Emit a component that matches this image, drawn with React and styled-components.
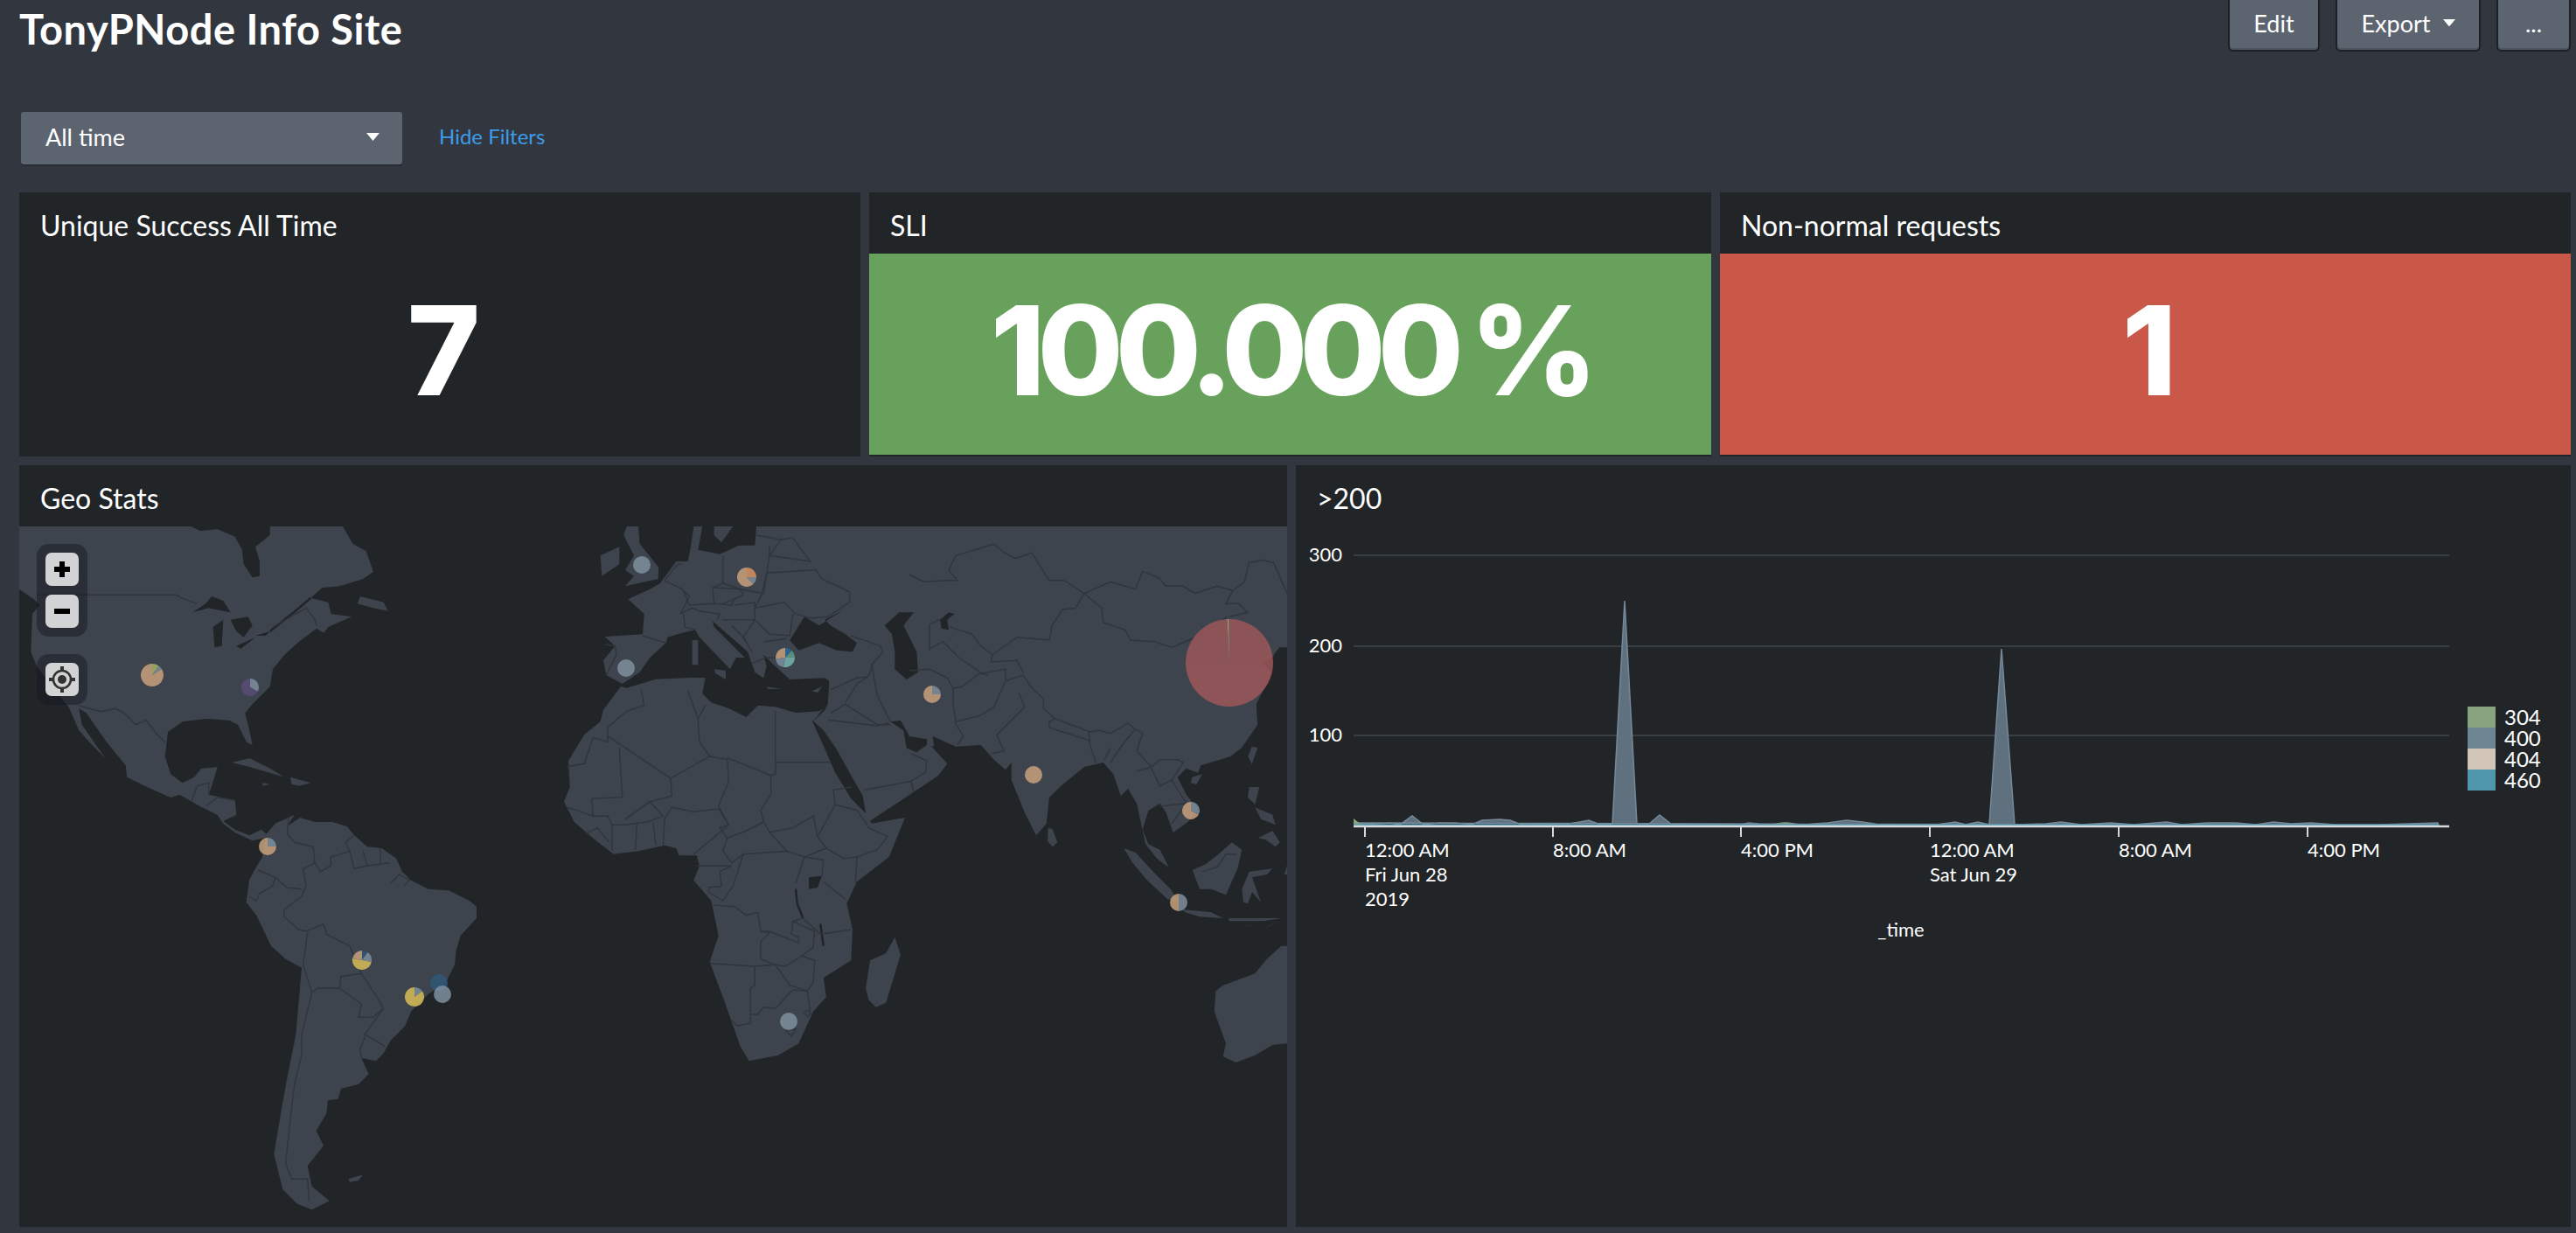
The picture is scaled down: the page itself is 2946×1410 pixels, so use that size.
import React from 'react';
import styled, { createGlobalStyle } from 'styled-components';

const Global = createGlobalStyle`
  html, body { margin: 0; padding: 0; background: #32373f; }
  body { font-family: Lato, "Open Sans", sans-serif; color: #fff; }
`;

// map outlines were traced on 3x crops, at() turns crop coordinates into page ones
const at = (ox, oy) => (pts) => pts.map(([x, y]) => [ox + x / 3, oy + y / 3]);
const na = at(22, 602);
const sa = at(250, 900);
const eu = at(660, 602);
const af = at(640, 770);
const as = at(1040, 602);
const se = at(1172, 900);
const line = (pts, close) =>
  'M' + pts.map(([x, y]) => `${x.toFixed(1)} ${y.toFixed(1)}`).join('L') + (close ? 'Z' : '');

const land = [
  // north america, joins south america at panama
  na([[0,0],[590,0],[620,15],[680,10],[740,35],[765,80],[770,130],[800,175],[825,170],[825,120],[810,70],[860,30],[860,0],[1110,0],[1145,60],[1190,85],[1215,155],[1180,180],[1100,205],[1040,210],[1000,245],[1060,260],[1070,300],[1140,310],[1060,345],[1045,365],[1020,350],[960,395],[910,440],[870,490],[860,550],[800,610],[775,640],[790,700],[800,750],[780,740],[750,680],[720,665],[640,660],[560,670],[510,705],[500,790],[520,850],[560,880],[600,860],[625,830],[680,825],[665,875],[650,920],[740,940],[745,990],[700,1010],[740,1040],[790,1060],[830,1040],[860,1065],[800,1078],[740,1050],[700,1020],[680,990],[620,960],[550,920],[520,930],[440,895],[370,860],[365,820],[300,740],[230,640],[205,625],[215,680],[295,795],[250,750],[205,700],[170,620],[130,570],[60,480],[40,430],[45,300],[70,270],[50,250],[0,215]]),
  na([[1170,240],[1250,260],[1265,290],[1215,280],[1160,265]]),
  na([[730,810],[790,795],[860,830],[910,860],[860,845],[790,825]]),
  na([[930,860],[1000,880],[960,890],[935,885]]),
  na([[835,880],[860,885],[835,890]]),
  // south america
  sa([[160,165],[195,125],[260,95],[235,135],[280,105],[330,120],[390,120],[440,135],[465,165],[510,205],[560,210],[610,245],[630,290],[660,320],[720,350],[790,355],[860,390],[885,410],[885,450],[830,510],[815,560],[810,610],[780,670],[720,710],[660,770],[640,820],[590,870],[565,915],[540,940],[490,930],[515,985],[480,1020],[420,1035],[410,1070],[375,1075],[370,1120],[335,1180],[360,1230],[305,1300],[320,1370],[380,1420],[320,1450],[270,1430],[220,1380],[190,1260],[215,1110],[235,1000],[265,850],[285,620],[230,590],[180,545],[130,440],[95,395],[105,320],[120,290],[150,240]]),
  sa([[445,1345],[495,1330],[480,1350],[450,1355]]),
  // africa
  af([[210,45],[150,125],[140,165],[85,210],[30,300],[35,390],[15,440],[50,510],[120,570],[185,620],[270,610],[360,590],[400,600],[410,625],[470,625],[480,660],[460,710],[520,780],[535,850],[545,900],[515,990],[560,1110],[620,1280],[650,1330],[750,1310],[820,1270],[870,1160],[915,1110],[905,1045],[1000,985],[1005,880],[985,790],[1020,715],[1130,630],[1185,495],[1070,515],[1045,470],[960,340],[900,200],[870,165],[905,120],[890,130],[810,135],[740,115],[680,110],[640,150],[580,120],[520,100],[490,70],[500,15],[450,15],[330,20],[230,50]]),
  // eurasia, going clockwise from the baltic
  [...eu([[615,0]]), [1472, 602],
   ...as([[1296,415],[1270,415],[1250,440],[1240,510],[1190,610],[1195,680],[1140,760],[1100,790],[1000,820],[990,845],[950,830],[920,860],[950,920],[990,970],[960,1010],[905,1050],[880,980],[860,950],[820,975],[800,1040],[820,1090],[860,1110],[890,1170],[850,1140],[810,1090],[780,950],[750,900],[725,925],[700,850],[665,810],[600,825],[520,890],[480,930],[470,1020],[435,1060],[395,980],[350,870],[350,810],[330,835],[290,800],[245,750],[160,755],[80,720]]),
   ...af([[1285,250],[1275,250],[1330,310],[1300,350],[1210,410],[1060,510],[1045,470],[1010,400],[900,200],[870,165]]),
   ...eu([[850,630],[860,610],[865,530],[850,520],[730,525],[680,480],[640,440],[650,480],[640,520],[610,500],[585,430],[465,325],[470,345],[575,450],[545,450],[525,490],[420,380],[405,355],[360,365],[310,380],[305,400],[250,450],[215,500],[155,540],[100,510],[90,460],[130,410],[95,378],[225,370],[230,300],[175,250],[250,215],[285,195],[340,120],[380,120],[390,70],[400,0],[430,0],[415,80],[490,95],[555,65],[610,65]])],
  // europe islands
  eu([[80,100],[145,70],[145,130],[85,170]]),
  eu([[160,30],[170,0],[210,0],[215,60],[280,140],[278,180],[210,195],[165,205],[195,170],[165,150],[195,100]]),
  eu([[470,0],[535,0],[495,55],[470,30]]),
  eu([[395,390],[415,390],[415,475],[395,475]]),
  eu([[470,490],[510,495],[510,525],[475,505]]),
  eu([[650,550],[700,558],[655,558]]),
  eu([[805,565],[840,550],[825,570]]),
  // indian ocean and south east asia
  af([[1150,905],[1170,965],[1120,1130],[1085,1145],[1060,1120],[1050,1080],[1065,985],[1120,960]]),
  se([[80,140],[95,145],[112,190],[95,205],[78,185]]),
  se([[340,210],[380,225],[440,290],[500,350],[530,395],[490,385],[420,320],[370,260]]),
  se([[540,420],[640,430],[680,450],[600,445],[550,430]]),
  se([[700,450],[880,450],[820,460],[700,460]]),
  se([[750,470],[780,480],[760,475]]),
  se([[815,490],[880,455],[840,475]]),
  se([[575,285],[620,265],[665,230],[710,190],[745,215],[730,280],[690,370],[640,350],[600,350]]),
  se([[745,350],[770,290],[850,280],[830,300],[780,310],[810,395],[780,360],[765,400],[750,395]]),
  se([[770,0],[805,0],[790,60],[765,35]]),
  se([[800,175],[850,150],[875,190],[860,205],[825,180]]),
  se([[790,70],[850,95],[860,130],[810,110]]),
  se([[900,270],[900,300],[890,300]]),
  as([[1175,755],[1195,760],[1175,815],[1162,790]]),
  as([[970,860],[1005,850],[985,885],[965,880]]),
  // australia
  se([[900,545],[880,545],[830,590],[790,640],[680,680],[655,700],[650,770],[690,880],[680,925],[725,945],[790,920],[850,885],[900,880]]),
];

const waters = [
  eu([[730,390],[780,310],[830,340],[915,285],[850,320],[870,340],[920,370],[960,400],[945,430],[890,425],[830,400],[760,425]]),
  eu([[1055,340],[1105,295],[1155,295],[1120,340],[1165,430],[1170,500],[1130,525],[1090,490],[1090,430],[1080,370]]),
  eu([[1075,670],[1110,665],[1140,720],[1200,730],[1200,750],[1165,775],[1130,760],[1120,700]]),
  af([[865,160],[905,195],[950,260],[1000,350],[1040,420],[1050,480],[1000,430],[945,340],[895,225]]),
  af([[855,700],[900,695],[885,735],[855,740]]),
  as([[105,320],[135,295],[155,300],[130,320],[135,355],[110,350]]),
  na([[595,295],[640,265],[660,240],[700,255],[725,295],[700,290],[650,280]]),
  na([[665,345],[700,320],[695,410],[670,415]]),
  na([[725,320],[785,310],[800,340],[770,380],[745,360]]),
  na([[745,410],[810,380],[760,420]]),
  na([[810,375],[860,360],[845,375]]),
  as([[1240,500],[1215,470],[1250,445],[1246,500]]),
];

const rivers = [
  na([[860,360],[960,280],[1000,245]]),
  af([[810,740],[815,790],[835,840]]),
  af([[895,860],[905,935]]),
];

const borders = [
  na([[60,235],[540,235],[555,245],[610,265]]),
  na([[870,345],[930,310],[985,280],[1015,320],[1020,340]]),
  na([[205,615],[280,635],[330,625],[360,640],[400,680],[435,665],[470,710],[500,740]]),
  na([[590,945],[610,890],[650,880],[650,920]]),
  na([[640,960],[680,930],[740,940]]),
  sa([[240,105],[235,160],[260,190],[325,205],[330,260],[290,280],[300,340],[285,375]]),
  sa([[330,260],[350,290],[385,270],[385,240],[450,220],[435,190],[465,165]]),
  sa([[450,220],[465,280],[510,270],[495,220]]),
  sa([[555,260],[555,210]]),
  sa([[510,270],[585,260]]),
  sa([[590,330],[620,300],[655,320],[635,340]]),
  sa([[135,285],[195,310],[235,345],[285,350]]),
  sa([[195,310],[185,340],[140,365],[130,390],[105,375]]),
  sa([[285,375],[225,420],[225,445],[275,490],[300,495],[360,470]]),
  sa([[360,470],[370,505],[450,545],[490,640],[420,650],[415,690],[340,690],[320,705],[290,610],[305,500]]),
  sa([[415,690],[490,745],[480,790],[530,790],[565,760],[550,730],[490,640]]),
  sa([[320,705],[285,850],[285,920],[260,1020],[245,1150],[230,1290],[250,1345],[305,1345],[310,1420]]),
  sa([[490,930],[485,900],[505,850],[570,890]]),
  sa([[565,760],[500,850]]),
  // africa
  af([[165,185],[165,235],[115,220],[85,310],[25,320]]),
  af([[280,55],[290,110],[230,130],[165,185]]),
  af([[165,215],[380,360]]),
  af([[205,255],[215,425],[110,430]]),
  af([[380,360],[385,420],[310,440],[225,500]]),
  af([[380,360],[515,285],[575,295],[580,370],[545,455]]),
  af([[440,60],[475,155],[480,235],[515,285]]),
  af([[475,155],[500,110]]),
  af([[740,130],[740,345]]),
  af([[575,290],[725,350],[740,345],[740,305],[930,305]]),
  af([[725,350],[725,415],[690,470],[700,510]]),
  af([[545,455],[580,520],[550,530],[575,565],[640,540],[700,510]]),
  af([[385,460],[460,475],[545,465],[580,520],[460,620]]),
  af([[385,460],[360,500],[355,590]]),
  af([[225,500],[310,440],[355,490],[300,510],[225,520]]),
  af([[265,510],[260,605]]),
  af([[320,510],[330,590]]),
  af([[110,430],[115,490],[165,490],[180,520],[225,520]]),
  af([[25,460],[60,470],[115,490]]),
  af([[180,520],[180,610]]),
  af([[90,550],[130,530],[170,580]]),
  af([[575,565],[560,610],[590,650],[630,620],[780,610],[720,545],[700,510]]),
  af([[720,545],[800,530],[870,490],[885,560],[915,600],[840,630],[780,610]]),
  af([[885,560],[945,450],[1020,470],[1050,510],[1060,530],[1125,560],[1090,605],[1020,630],[975,635],[915,600]]),
  af([[945,450],[940,400],[1000,390]]),
  af([[1020,630],[1015,720]]),
  af([[840,630],[905,640],[900,695]]),
  af([[905,715],[980,775]]),
  af([[630,620],[595,730],[560,780],[510,750],[515,730]]),
  af([[470,660],[590,660],[550,680],[555,730],[510,735]]),
  af([[840,630],[810,720]]),
  af([[835,840],[800,850],[795,895],[820,905],[820,925],[770,905],[720,885],[690,885],[680,820],[640,830],[600,800],[530,795]]),
  af([[690,885],[720,890],[690,920],[690,980],[740,1000],[670,1005],[515,995]]),
  af([[740,1000],[775,1005],[830,970],[875,985],[870,1060],[850,1090]]),
  af([[830,970],[870,940],[875,885],[800,850]]),
  af([[835,840],[895,895],[1000,880]]),
  af([[670,1005],[670,1070],[655,1080],[655,1200],[610,1210],[590,1190]]),
  af([[655,1170],[680,1170],[700,1145],[740,1150],[800,1085],[850,1090],[860,1160]]),
  af([[740,1000],[790,1070],[850,1090]]),
  af([[775,1225],[810,1220],[795,1245],[775,1225]]),
  af([[850,1155],[862,1165],[850,1178],[838,1165],[850,1155]]),
  af([[920,160],[1090,180],[1130,170]]),
  af([[1045,400],[1130,385],[1205,370],[1255,340],[1260,300],[1205,275]]),
  af([[1205,370],[1215,405]]),
  // middle east and europe
  eu([[870,640],[920,610],[1030,680],[1075,680]]),
  eu([[870,560],[960,520],[1000,515],[960,540],[920,605]]),
  eu([[1010,470],[1030,580],[1075,670]]),
  eu([[1000,515],[1015,470],[1050,430]]),
  eu([[940,375],[1040,410],[1050,430]]),
  eu([[225,375],[305,400]]),
  eu([[300,185],[360,215],[385,240],[355,300]]),
  eu([[365,300],[370,345],[405,355]]),
  eu([[355,300],[395,280],[420,290]]),
  eu([[360,210],[385,270],[470,265],[465,210],[500,195],[500,100]]),
  eu([[500,195],[560,215],[640,230],[660,100],[660,70]]),
  eu([[615,30],[700,45],[660,100]]),
  eu([[735,40],[700,45]]),
  eu([[660,100],[800,120],[740,40]]),
  eu([[650,160],[800,150]]),
  eu([[650,160],[635,230],[610,280],[710,260],[750,300],[800,315],[860,310],[935,260],[935,225],[840,180],[820,150],[800,150]]),
  eu([[540,270],[610,260],[610,320],[660,370],[730,375],[740,300]]),
  eu([[610,320],[570,380],[600,430]]),
  eu([[640,395],[720,385]]),
  eu([[420,290],[490,300],[480,320]]),
  eu([[470,265],[530,270],[540,250]]),
  eu([[470,210],[560,215],[570,235],[500,265]]),
  eu([[500,320],[570,320],[610,320]]),
  eu([[530,340],[580,390]]),
  eu([[600,470],[650,450],[690,450]]),
  eu([[95,405],[130,410],[135,440],[100,510]]),
  eu([[300,185],[345,130],[360,130]]),
  // asia
  as([[0,165],[50,190],[130,185],[165,185],[135,150],[160,100],[290,60],[325,90],[365,110],[420,90],[480,185],[530,185],[600,230]]),
  as([[600,230],[690,190],[775,215],[800,155],[855,175],[880,205],[940,205],[980,230],[1055,205],[1110,220],[1150,190],[1165,125],[1210,115],[1250,125],[1296,230]]),
  as([[1110,220],[1085,265],[1130,265],[1160,295],[1100,310]]),
  as([[600,230],[660,280],[665,330],[740,355],[760,390],[840,395],[900,415],[960,390],[1000,370],[1090,310]]),
  as([[70,335],[70,425]]),
  as([[70,335],[105,320]]),
  as([[140,345],[215,370],[245,410],[285,440],[370,380],[480,390],[490,340],[525,285],[570,280],[600,230]]),
  as([[70,420],[115,395],[170,450],[250,505],[270,510]]),
  as([[285,440],[280,465],[370,460],[390,500]]),
  as([[150,555],[180,550],[240,505],[330,490],[330,530],[290,620],[240,650],[160,670],[150,610],[150,555]]),
  as([[0,495],[70,490],[130,520],[150,555]]),
  as([[155,670],[185,720],[165,750]]),
  as([[330,530],[390,510],[425,560],[460,590],[460,625],[500,660],[620,705],[650,700],[690,710],[750,675],[775,695],[800,710],[780,770],[830,825]]),
  as([[375,570],[395,620],[300,715],[325,770],[280,780]]),
  as([[500,660],[480,670],[480,690],[620,735],[615,705]]),
  as([[615,735],[640,810]]),
  as([[690,760],[670,800]]),
  as([[775,695],[730,750],[690,810]]),
  as([[780,840],[830,825],[860,800],[920,800],[940,810],[900,870],[950,950]]),
  as([[830,830],[860,890],[900,870]]),
  as([[860,960],[950,950],[900,1020]]),
  se([[610,290],[660,275],[690,230],[725,230]]),
];

const TAN = '#c8a07e';
const GREY = '#7e8f9d';
const YEL = '#d9bd56';
const BLUE = '#2f5778';

const markers = [
  { x: 174, y: 772, r: 13, s: [['#a7b25c', 0.1], [GREY, 0.06], [TAN, 0.84]] },
  { x: 286, y: 786, r: 10, s: [[GREY, 0.33], ['#5c4c78', 0.67]] },
  { x: 306, y: 968, r: 10, s: [[GREY, 0.25], [TAN, 0.75]] },
  { x: 414, y: 1098, r: 11, s: [[BLUE, 0.1], [GREY, 0.18], [YEL, 0.5], [TAN, 0.22]] },
  { x: 474, y: 1140, r: 11, s: [[GREY, 0.15], [YEL, 0.85]] },
  { x: 502, y: 1124, r: 10, s: [[BLUE, 1]] },
  { x: 506, y: 1137, r: 10, s: [[GREY, 1]] },
  { x: 734, y: 646, r: 10, s: [[GREY, 1]] },
  { x: 716, y: 764, r: 10, s: [[GREY, 1]] },
  { x: 854, y: 660, r: 11, s: [['#d8935f', 0.25], [GREY, 0.13], [TAN, 0.62]] },
  { x: 898, y: 752, r: 11, s: [['#2a6a9a', 0.12], ['#5c9c87', 0.13], ['#74b5b2', 0.28], [GREY, 0.2], [TAN, 0.27]] },
  { x: 1066, y: 794, r: 10, s: [[GREY, 0.25], [TAN, 0.75]] },
  { x: 1182, y: 886, r: 10, s: [[TAN, 1]] },
  { x: 1362, y: 927, r: 10, s: [[GREY, 0.33], [TAN, 0.67]] },
  { x: 1348, y: 1032, r: 10, s: [[GREY, 0.5], [TAN, 0.5]] },
  { x: 902, y: 1168, r: 10, s: [[GREY, 1]] },
  { x: 1406, y: 758, r: 50, o: 0.8, s: [['#a2595a', 0.995], ['#a9b884', 0.005]], from: -1 },
];

function slicePath(cx, cy, r, a, b) {
  const rad = (d) => ((d - 90) * Math.PI) / 180;
  const x1 = cx + r * Math.cos(rad(a));
  const y1 = cy + r * Math.sin(rad(a));
  const x2 = cx + r * Math.cos(rad(b));
  const y2 = cy + r * Math.sin(rad(b));
  return `M${cx} ${cy}L${x1} ${y1}A${r} ${r} 0 ${b - a > 180 ? 1 : 0} 1 ${x2} ${y2}Z`;
}

function Pie({ m }) {
  let angle = m.from || 0;
  return (
    <g opacity={m.o || 0.85}>
      {m.s.map(([color, part], i) => {
        if (part === 1) return <circle key={i} cx={m.x} cy={m.y} r={m.r} fill={color} />;
        const start = angle;
        angle += part * 360;
        return <path key={i} d={slicePath(m.x, m.y, m.r, start, angle)} fill={color} />;
      })}
    </g>
  );
}

function WorldMap() {
  return (
    <MapBox>
      <MapSvg viewBox="22 602 1450 801">
        {land.map((p, i) => <path key={i} d={line(p, true)} fill="#3d444d" />)}
        {waters.map((p, i) => <path key={i} d={line(p, true)} fill="#212528" />)}
        {rivers.map((p, i) => (
          <path key={i} d={line(p)} fill="none" stroke="#212528" strokeWidth="2.5" />
        ))}
        {borders.map((p, i) => (
          <path key={i} d={line(p)} fill="none" stroke="#30353c" strokeWidth="1.4" />
        ))}
        {markers.map((m, i) => <Pie key={i} m={m} />)}
      </MapSvg>
      <ZoomGroup>
        <MapButton>
          <svg width="20" height="20" viewBox="0 0 20 20"><path d="M7 1h6v6h6v6h-6v6H7v-6H1V7h6z" fill="#000" /></svg>
        </MapButton>
        <MapButton>
          <svg width="20" height="20" viewBox="0 0 20 20"><rect x="1" y="7" width="18" height="6" fill="#000" /></svg>
        </MapButton>
      </ZoomGroup>
      <LocateGroup>
        <MapButton>
          <svg width="32" height="32" viewBox="0 0 32 32" fill="none" stroke="#333" strokeWidth="2.6">
            <circle cx="16" cy="16" r="10" />
            <circle cx="16" cy="16" r="5" fill="#333" stroke="none" />
            <path d="M16 1v5M16 26v5M1 16h5M26 16h5" strokeWidth="4" />
          </svg>
        </MapButton>
      </LocateGroup>
    </MapBox>
  );
}

// chart, page coordinates through the viewBox
const greyTop = [
  [1548,941],[1560,943],[1590,941],[1601,943],[1615,933],[1628,943],[1645,941],[1665,941],[1683,943],[1695,938],[1715,937],[1727,938],[1740,943],[1790,943],[1817,938],[1830,943],[1844,942],[1858,687],[1872,942],[1885,943],[1898,932],[1912,943],[1990,943],[2000,941],[2020,943],[2045,941],[2060,943],[2090,941],[2112,938],[2130,940],[2150,943],[2195,943],[2215,943],[2236,940],[2248,943],[2262,940],[2275,943],[2289,742],[2304,943],[2340,942],[2357,940],[2380,943],[2414,941],[2440,943],[2478,940],[2495,943],[2524,941],[2557,941],[2580,943],[2600,940],[2620,942],[2643,941],[2670,943],[2720,943],[2788,941],[2789,944],
];
const yTicks = [[300, 635], [200, 739], [100, 841]];
const xTicks = [
  { x: 1561, lines: ['12:00 AM', 'Fri Jun 28', '2019'] },
  { x: 1776, lines: ['8:00 AM'] },
  { x: 1991, lines: ['4:00 PM'] },
  { x: 2207, lines: ['12:00 AM', 'Sat Jun 29'] },
  { x: 2423, lines: ['8:00 AM'] },
  { x: 2639, lines: ['4:00 PM'] },
];
const legend = [['304', '#87a47e'], ['400', '#708594'], ['404', '#d0c5b7'], ['460', '#4e97ac']];

function AreaChart() {
  return (
    <ChartSvg viewBox="1482 602 1458 801">
      {yTicks.map(([label, y]) => (
        <g key={label}>
          <line x1="1548" x2="2801" y1={y} y2={y} stroke="#373f44" strokeWidth="2" />
          <ChartText x="1535" y={y + 7} textAnchor="end">{label}</ChartText>
        </g>
      ))}
      <path d={line(greyTop, true)} fill="#5f707f" stroke="#76899a" strokeWidth="1.5" />
      <path d="M1548 936L1558 944H1548Z" fill="#87a47e" />
      <path d="M2060 944L2020 944L2020 943L2040 940L2060 944Z" fill="#87a47e" opacity="0.6" />
      <path d="M1548 942.5L2789 942.5L2789 944L1548 944Z" fill="#4e97ac" />
      <line x1="1548" x2="2801" y1="945" y2="945" stroke="#d6d8d9" strokeWidth="2.5" />
      {xTicks.map((t) => (
        <g key={t.x}>
          <line x1={t.x} x2={t.x} y1="946" y2="957" stroke="#d6d8d9" strokeWidth="2" />
          {t.lines.map((l, i) => (
            <ChartText key={l} x={t.x} y={980 + i * 28}>{l}</ChartText>
          ))}
        </g>
      ))}
      <ChartText x="2174" y="1071" textAnchor="middle">_time</ChartText>
      {legend.map(([label, color], i) => (
        <g key={label}>
          <rect x="2822" y={808 + i * 24} width="32" height="24" fill={color} />
          <LegendText x="2864" y={829 + i * 24}>{label}</LegendText>
        </g>
      ))}
    </ChartSvg>
  );
}

function Caret({ size = 14 }) {
  return (
    <svg width={size} height={size * 0.6} viewBox="0 0 10 6"><path d="M0 0h10L5 6z" fill="#fff" /></svg>
  );
}

export default function App() {
  return (
    <>
      <Global />
      <Page>
        <Header>
          <Title>TonyPNode Info Site</Title>
          <Actions>
            <TopButton $w={105}>Edit</TopButton>
            <TopButton $w={166}>Export <Caret /></TopButton>
            <TopButton $w={85}>...</TopButton>
          </Actions>
        </Header>
        <FilterRow>
          <Select>All time <Caret size={15} /></Select>
          <FilterLink>Hide Filters</FilterLink>
        </FilterRow>
        <TopRow>
          <Panel>
            <PanelTitle>Unique Success All Time</PanelTitle>
            <SingleValue>7</SingleValue>
          </Panel>
          <Panel>
            <PanelTitle>SLI</PanelTitle>
            <SingleValue $bg="#67a15b">100.000 %</SingleValue>
          </Panel>
          <Panel>
            <PanelTitle>Non-normal requests</PanelTitle>
            <SingleValue $bg="#ca5849">1</SingleValue>
          </Panel>
        </TopRow>
        <BottomRow>
          <Panel>
            <PanelTitle>Geo Stats</PanelTitle>
            <WorldMap />
          </Panel>
          <Panel>
            <PanelTitle>&gt;200</PanelTitle>
            <AreaChart />
          </Panel>
        </BottomRow>
      </Page>
    </>
  );
}

const Page = styled.div`
  width: 2946px;
  height: 1410px;
  box-sizing: border-box;
  padding: 0 6px 7px 22px;
  overflow: hidden;
  display: flex;
  flex-direction: column;
`;

const Header = styled.div`
  display: flex;
  justify-content: space-between;
  align-items: flex-start;
  height: 127px;
`;

const Title = styled.h1`
  margin: 0;
  font-size: 47px;
  line-height: 66px;
  font-weight: 700;
  letter-spacing: 0.5px;
`;

const Actions = styled.div`
  display: flex;
  gap: 18px;
`;

const TopButton = styled.div`
  width: ${(p) => p.$w}px;
  height: 59px;
  box-sizing: border-box;
  padding-bottom: 5px;
  background: #5c6470;
  border: 2px solid #1d2125;
  border-top: 0;
  border-radius: 0 0 6px 6px;
  box-shadow: inset 0 -2px 0 #4c545f;
  display: flex;
  align-items: center;
  justify-content: center;
  gap: 14px;
  font-size: 27px;
`;

const FilterRow = styled.div`
  display: flex;
  align-items: center;
  gap: 42px;
  height: 62px;
  margin-bottom: 31px;
  padding-left: 2px;
`;

const Select = styled.div`
  width: 436px;
  height: 60px;
  box-sizing: border-box;
  background: #5c6470;
  border-radius: 3px;
  box-shadow: 0 2px 0 #282c32;
  padding: 0 26px 4px 28px;
  display: flex;
  align-items: center;
  justify-content: space-between;
  font-size: 27px;
`;

const FilterLink = styled.a`
  color: #3d9be9;
  font-size: 24px;
  margin-bottom: 6px;
`;

const TopRow = styled.div`
  display: grid;
  grid-template-columns: 962px 963px 973px;
  gap: 10px;
  height: 302px;
  margin-bottom: 10px;
`;

const BottomRow = styled.div`
  display: grid;
  grid-template-columns: 1450px 1458px;
  gap: 10px;
  flex: 1;
  min-height: 0;
`;

const Panel = styled.section`
  background: #212528;
  display: flex;
  flex-direction: column;
  min-height: 0;
`;

const PanelTitle = styled.h2`
  margin: 0;
  flex: 0 0 70px;
  box-sizing: border-box;
  padding: 5px 24px 0;
  display: flex;
  align-items: center;
  font-size: 32px;
  font-weight: 400;
`;

const SingleValue = styled.div`
  flex: 1;
  margin-bottom: 2px;
  padding-bottom: 10px;
  background: ${(p) => p.$bg || 'transparent'};
  display: flex;
  align-items: center;
  justify-content: center;
  font-family: Inter, Lato, sans-serif;
  font-size: 142px;
  font-weight: 800;
  letter-spacing: -9px;
  word-spacing: -6px;
`;

const MapBox = styled.div`
  position: relative;
  flex: 1;
  min-height: 0;
  overflow: hidden;
`;

const MapSvg = styled.svg`
  display: block;
  width: 100%;
  height: 100%;
`;

const ChartSvg = styled.svg`
  display: block;
  width: 100%;
  flex: 1;
  min-height: 0;
`;

const ChartText = styled.text`
  fill: #fff;
  font-size: 22px;
`;

const LegendText = styled.text`
  fill: #fff;
  font-size: 24px;
`;

const MapControls = styled.div`
  position: absolute;
  left: 20px;
  width: 58px;
  box-sizing: border-box;
  padding: 10px;
  background: rgba(24, 24, 34, 0.5);
  border-radius: 14px;
  display: flex;
  flex-direction: column;
  gap: 10px;
`;

const ZoomGroup = styled(MapControls)`
  top: 20px;
`;

const LocateGroup = styled(MapControls)`
  top: 146px;
`;

const MapButton = styled.div`
  width: 38px;
  height: 38px;
  border-radius: 7px;
  background: #d2d3d4;
  display: flex;
  align-items: center;
  justify-content: center;
`;
